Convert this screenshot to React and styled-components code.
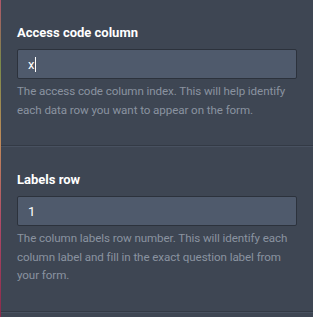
import React from 'react';
import styled, { createGlobalStyle } from 'styled-components';

const GlobalStyle = createGlobalStyle`
  html, body {
    margin: 0;
    padding: 0;
    background: #3e4653;
  }
  body {
    font-family: Roboto, "Noto Sans", sans-serif;
    -webkit-font-smoothing: antialiased;
  }
`;

const Page = styled.div`
  display: flex;
  width: 313px;
  height: 317px;
  overflow: hidden;
`;

const Edge = styled.div`
  width: 1px;
  flex-shrink: 0;
  background: linear-gradient(180deg, #b0566a 0%, #7a8a4a 20%, #c08a5a 45%, #b04a68 70%, #8a2a4a 100%);
`;

const Panel = styled.div`
  flex: 1;
  display: flex;
  flex-direction: column;
  margin-top: -1px;
`;

const Section = styled.div`
  display: flex;
  flex-direction: column;
  padding: 26px 16px 26px 16px;
  border-bottom: 1px solid #333a45;
  box-shadow: 0 1px 0 #485160;
`;

const Title = styled.div`
  color: #ffffff;
  font-size: 13px;
  font-weight: 700;
  line-height: 16px;
  margin-bottom: 8px;
`;

const Field = styled.div`
  display: flex;
  align-items: center;
  height: 30px;
  box-sizing: border-box;
  padding: 0 10px;
  background: #4f5a6c;
  border: 1px solid #2c323c;
  border-radius: 2px;
  color: #ffffff;
  font-size: 13px;
`;

const Caret = styled.span`
  display: inline-block;
  width: 1px;
  height: 15px;
  margin-left: 1px;
  background: #ffffff;
`;

const Help = styled.p`
  margin: 3px 0 0;
  color: #8a93a0;
  font-size: 11.6px;
  letter-spacing: -0.08px;
  line-height: 18.5px;
`;

const fields = [
  {
    title: 'Access code column',
    value: 'x',
    focused: true,
    help: 'The access code column index. This will help identify each data row you want to appear on the form.',
  },
  {
    title: 'Labels row',
    value: '1',
    focused: false,
    help: 'The column labels row number. This will identify each column label and fill in the exact question label from your form.',
  },
];

export default function App() {
  return (
    <Page>
      <GlobalStyle />
      <Edge />
      <Panel>
        {fields.map(f => (
          <Section key={f.title}>
            <Title>{f.title}</Title>
            <Field>
              {f.value}
              {f.focused && <Caret />}
            </Field>
            <Help>{f.help}</Help>
          </Section>
        ))}
      </Panel>
    </Page>
  );
}
